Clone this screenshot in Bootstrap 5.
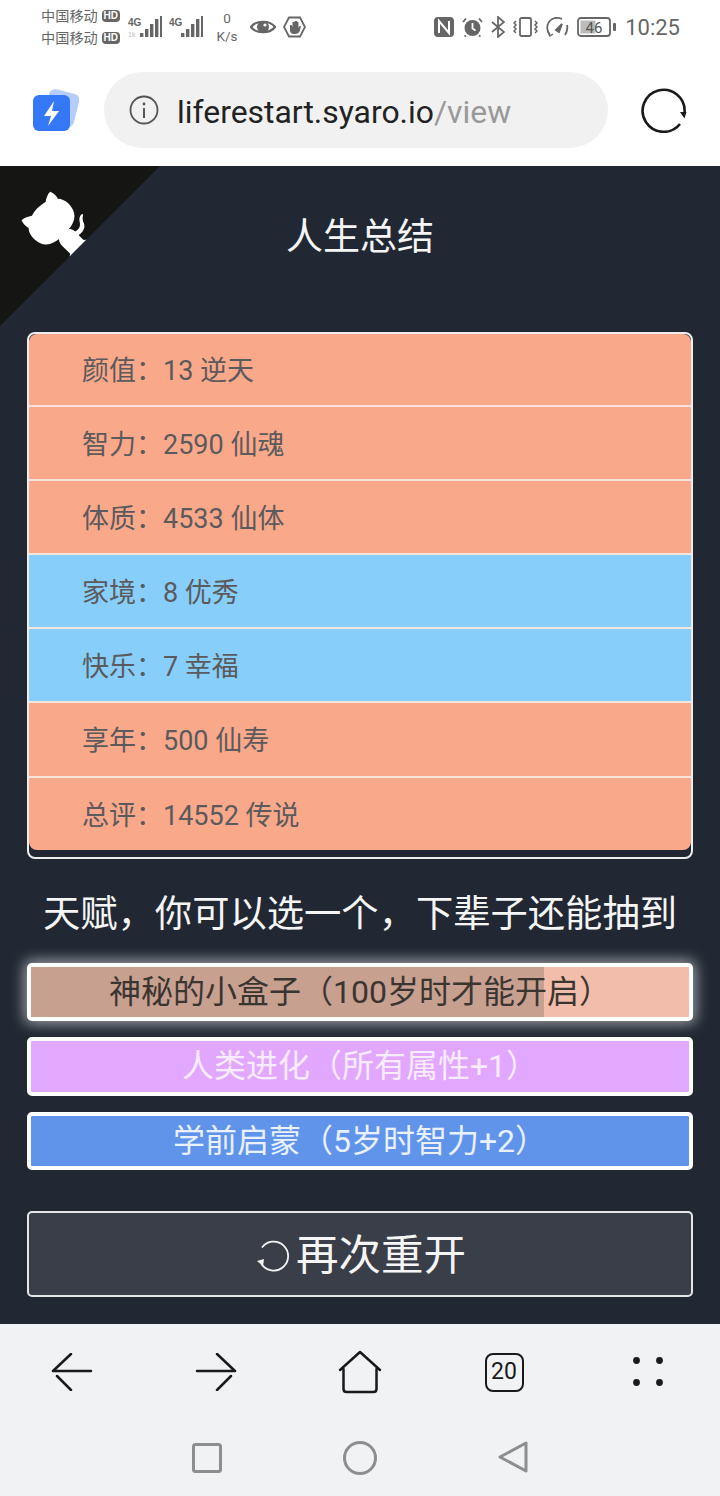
<!DOCTYPE html>
<html lang="zh">
<head>
<meta charset="utf-8">
<title>Life Restart</title>
<link href="https://cdn.jsdelivr.net/npm/bootstrap@5.3.0/dist/css/bootstrap.min.css" rel="stylesheet">
<style>
html,body{height:1496px;width:720px;overflow:hidden;background:#fff;font-family:Roboto,"Noto Sans CJK SC",sans-serif}
svg{display:block;flex:none}
.status-bar{height:60px;padding:0 0 6px 41px;color:#666;background:#fff}
.carrier{font-size:14.2px;line-height:22px;width:80px;white-space:nowrap;color:#666}
.carrier-line{display:flex;align-items:center;gap:4px}
.hd-tag{background:#666;color:#fff;font:700 10px/12px "Liberation Sans",sans-serif;width:18px;height:12px;border-radius:4px;text-align:center;flex:none}
.net-speed{width:24px;text-align:center;font-size:13.5px;line-height:18px;color:#666;margin-left:12px}
.clock{font-size:22px;line-height:26px;color:#666;margin-left:8px;font-weight:400;padding-top:2px}
.sig-first{margin-left:7px}
.sig-next{margin-left:7px}
.eye-icon{margin-left:11px}
.tray{padding-right:40px}
.addr-bar{height:106px;padding:0 33px 6px 33px;background:#fff}
.addr-pill{width:504px;height:76px;border-radius:38px;background:#f1f1f1;margin-left:25px;padding-left:25px}
.addr-text{font-size:31.900px;line-height:40px;color:#222;margin-left:18px;white-space:nowrap;padding-top:3px;height:43px}
.addr-path{color:#999}
.stage{height:1158px;background:#212833;color:#f5f5f5;padding:44px 27px 0;position:relative}
.fork-corner{position:absolute;left:0;top:0}
.page-title{font-size:37px;line-height:52px;font-weight:400;text-align:center;margin:2px 0 68px}
.stats-panel{height:527px;background:#212833;border:2px solid #eee;border-radius:8px;overflow:hidden;--bs-list-group-bg:transparent}
.stat-row{height:74.100px;line-height:76px;font-size:27px;color:#5b5a5c;padding:0 0 0 53px;border:0;border-bottom:2px solid #f4e4dc;white-space:nowrap;border-radius:0}
.stat-row:first-child{height:73.100px;line-height:74px}
.stat-row:last-child{border-bottom:0;height:72px}
.tone-legend{background:#f9a88a}
.tone-rare{background:#87cefa}
.talent-title{font-size:37.300px;line-height:50px;font-weight:400;text-align:center;margin:30px -10px 24px;white-space:nowrap}
.talent-btn{display:block;position:relative;width:100%;height:58px;padding:0;border:4px solid #fff;border-radius:5px;font-size:32px;line-height:50px;color:#fdf3f8;margin-bottom:16px;overflow:hidden;--bs-btn-border-radius:5px}
.talent-btn span{position:relative}
.talent-box{background:#f2bdaa;color:#3b3531;box-shadow:0 0 14px 3px rgba(255,255,255,.55);overflow:visible}
.talent-fill{position:absolute;left:0;top:0;bottom:0;background:#c7a090}
.talent-purple{background:#e2a7ff;color:#f9ecff}
.talent-blue{background:#6094eb;color:#e8f1fd}
.talent-blue,.talent-purple{height:58.500px;line-height:51px}
.again-btn{width:100%;height:86px;margin-top:41px;padding:4px 0 0 2px;background:#3a3e48;border:2px solid #e6e6e6;border-radius:5px;color:#f5f5f5;font-size:42.500px;line-height:50px}
.again-label{margin-left:6px}
.bottom-bar{height:172px;background:#f1f2f4}
.browser-nav{height:92px}
.nav-cell{width:144px;height:92px;padding-top:4px}
.tab-count{width:39px;height:39px;border:2.500px solid #1a1a1a;border-radius:8px;font-size:23px;line-height:34px;text-align:center;color:#1a1a1a}
.system-nav{height:80px}
.sys-cell{width:153px;padding-top:27px}
.sys-lift{margin-top:-2px}
</style>
</head>
<body>

<div class="status-bar d-flex align-items-center">
  <div class="carrier">
    <div class="carrier-line">中国移动<span class="hd-tag">HD</span></div>
    <div class="carrier-line">中国移动<span class="hd-tag">HD</span></div>
  </div>
  <svg class="sig-first" width="34" height="22" viewBox="0 0 34 22" fill="#666"><text x="0" y="10" font-family="Liberation Sans" font-size="10" font-weight="700">4G</text><text x="0" y="21" font-family="Liberation Sans" font-size="7" fill="#bbb">1k</text><rect x="12" y="17" width="3.400" height="4"/><rect x="17" y="13" width="3.400" height="8"/><rect x="22" y="8" width="3.400" height="13"/><rect x="27" y="3" width="3.400" height="18"/><rect x="32" y="0" width="2" height="21"/></svg>
  <svg class="sig-next" width="34" height="22" viewBox="0 0 34 22" fill="#666"><text x="0" y="10" font-family="Liberation Sans" font-size="10" font-weight="700">4G</text><rect x="12" y="17" width="3.400" height="4"/><rect x="17" y="13" width="3.400" height="8"/><rect x="22" y="8" width="3.400" height="13"/><rect x="27" y="3" width="3.400" height="18"/><rect x="32" y="0" width="2" height="21"/></svg>
  <div class="net-speed">0<br>K/s</div>
  <svg class="eye-icon" width="26" height="18" viewBox="0 0 26 18"><path d="M1 9C6 2 20 2 25 9 20 16 6 16 1 9Z" fill="none" stroke="#666" stroke-width="2.200"/><circle cx="13" cy="9" r="6" fill="#666"/><circle cx="15" cy="7" r="1.600" fill="#fff"/></svg>
  <svg class="sig-next" width="23" height="22" viewBox="0 0 23 22"><path d="M6 1.500h11L22 11l-5 9.500H6L1 11Z" fill="none" stroke="#666" stroke-width="1.800"/><path d="M7 9v5c0 3 2 4 4.500 4s5-1 5.500-4l1-4h-1.500l-1 2V6h-1.200v4V5h-1.300v5V5h-1.300v5V6H9.500v5L8.500 9Z" fill="#666"/></svg>
  <div class="ms-auto d-flex align-items-center tray">
    <svg width="20" height="20" viewBox="0 0 20 20"><rect width="20" height="20" rx="4" fill="#666"/><path d="M5 16V4l10 12V4" fill="none" stroke="#fff" stroke-width="2"/></svg>
    <svg class="ms-2" width="21" height="20" viewBox="0 0 21 20"><circle cx="10.500" cy="11" r="8" fill="#666"/><path d="M10.500 6v5.500l3 2" fill="none" stroke="#fff" stroke-width="1.800"/><path d="M1 5l3-3.500M20 5l-3-3.500M4 18.500l-1.500 1M17 18.500l1.500 1" stroke="#666" stroke-width="1.800"/></svg>
    <svg class="ms-2" width="14" height="22" viewBox="0 0 14 22"><path d="M1 6l12 10-6 5V1l6 5L1 16" fill="none" stroke="#666" stroke-width="1.800"/></svg>
    <svg class="ms-2" width="25" height="20" viewBox="0 0 25 20" fill="none" stroke="#666" stroke-width="1.800"><rect x="7" y="1" width="11" height="18" rx="1.500"/><path d="M3 4 1 6l2 2-2 2 2 2-2 2 2 2M22 4l2 2-2 2 2 2-2 2 2 2-2 2" stroke-width="1.500"/></svg>
    <svg class="sig-next" width="24" height="22" viewBox="0 0 24 22" fill="none" stroke="#666" stroke-width="1.800"><path d="M5 19C0 13 2 4 10 2c3-.6 5 0 7 1M22 9c1 4 0 7-2 10"/><path d="M11 14l6-6-3 8Z" fill="#666"/><path d="M3 16l2 4 3-2" stroke-width="1.500"/></svg>
    <svg class="ms-2" width="40" height="20" viewBox="0 0 40 20"><rect x="1" y="1" width="32" height="18" rx="3" fill="none" stroke="#666" stroke-width="1.800"/><rect x="3.500" y="3.500" width="15" height="13" fill="#bbb"/><rect x="36" y="6" width="3" height="8" rx="1" fill="#666"/><text x="17" y="15.500" text-anchor="middle" font-family="Roboto" font-size="15" fill="#555">46</text></svg>
    <div class="clock">10:25</div>
  </div>
</div>

<div class="addr-bar d-flex align-items-center">
  <svg width="46" height="46" viewBox="0 0 46 46"><rect x="13" y="4" width="31" height="34" rx="6" fill="#b5cdfb" transform="rotate(14 28 21)"/><rect x="0" y="8" width="37" height="36" rx="6" fill="#3478f6"/><path d="M21 14l-10 15h7l-3 10 11-15h-7Z" fill="#fff"/></svg>
  <div class="addr-pill d-flex align-items-center">
    <svg width="30" height="30" viewBox="0 0 30 30"><circle cx="15" cy="15" r="13.500" fill="none" stroke="#555" stroke-width="1.800"/><rect x="14" y="13" width="2" height="10" fill="#555"/><circle cx="15" cy="9" r="1.400" fill="#555"/></svg>
    <div class="addr-text">liferestart.syaro.io<span class="addr-path">/view</span></div>
  </div>
  <svg class="ms-auto" width="46" height="46" viewBox="0 0 46 46"><path d="M39 37A21 21 0 1 1 43.600 25" fill="none" stroke="#1a1a1a" stroke-width="2.600"/><path d="M39 25h6.500l-2 6.500Z" fill="#1a1a1a"/></svg>
</div>

<main class="stage">
  <svg class="fork-corner" width="160" height="160" viewBox="0 0 250 250"><g transform="translate(250 0) scale(-1 1)"><path fill="#151513" d="M0,0 L115,115 L130,115 L142,142 L250,250 L250,0 Z"/><path fill="#fff" d="M128.300,109C113.800,99.700 119,89.600 119,89.600C122,82.700 120.500,78.600 120.500,78.600C119.200,72 123.400,76.300 123.400,76.300C127.300,80.900 125.500,87.300 125.500,87.300C122.900,97.600 130.600,101.900 134.400,103.200"/><path fill="#fff" d="M115,115C114.900,115.100 118.700,116.500 119.800,115.400L133.700,101.600C136.900,99.200 139.900,98.400 142.200,98.600C133.800,88 127.500,74.400 143.800,58C148.500,53.400 154,51.200 159.700,51C160.300,49.400 163.200,43.600 171.400,40.100C171.400,40.100 176.100,42.500 178.800,56.200C183.100,58.600 187.200,61.800 190.900,65.400C194.500,69 197.700,73.200 200.100,77.600C213.800,80.200 216.300,84.900 216.300,84.900C212.700,93.100 206.900,96 205.400,96.600C205.100,102.400 203,107.800 198.300,112.500C181.900,128.900 168.300,122.500 157.700,114.100C157.900,116.900 156.700,120.900 152.700,124.900L141,136.500C139.800,137.700 141.600,141.900 141.800,141.800Z"/></g></svg>

  <h1 class="page-title">人生总结</h1>

  <ul class="list-group stats-panel">
    <li class="list-group-item stat-row tone-legend">颜值：13 逆天</li>
    <li class="list-group-item stat-row tone-legend">智力：2590 仙魂</li>
    <li class="list-group-item stat-row tone-legend">体质：4533 仙体</li>
    <li class="list-group-item stat-row tone-rare">家境：8 优秀</li>
    <li class="list-group-item stat-row tone-rare">快乐：7 幸福</li>
    <li class="list-group-item stat-row tone-legend">享年：500 仙寿</li>
    <li class="list-group-item stat-row tone-legend">总评：14552 传说</li>
  </ul>

  <h2 class="talent-title">天赋，你可以选一个，下辈子还能抽到</h2>

  <button type="button" class="btn talent-btn talent-box"><div class="talent-fill" style="width:78%"></div><span>神秘的小盒子（100岁时才能开启）</span></button>
  <button type="button" class="btn talent-btn talent-purple"><span>人类进化（所有属性+1）</span></button>
  <button type="button" class="btn talent-btn talent-blue"><span>学前启蒙（5岁时智力+2）</span></button>

  <button type="button" class="btn again-btn d-flex align-items-center justify-content-center">
    <svg width="34" height="32" viewBox="0 0 34 32"><path d="M6 7.500A14.500 14.500 0 1 1 5.500 24" fill="none" stroke="#f5f5f5" stroke-width="1.800"/><path d="M1 21l7 -2-1 7Z" fill="#f5f5f5"/></svg>
    <span class="again-label">再次重开</span>
  </button>
</main>

<div class="bottom-bar">
  <div class="browser-nav d-flex">
    <div class="nav-cell d-flex align-items-center justify-content-center"><svg width="42" height="38" viewBox="0 0 42 38" fill="none" stroke="#1a1a1a" stroke-width="2.500" stroke-linecap="round"><path d="M2 18h38M20 1 2 18M6 23l14 14"/></svg></div>
    <div class="nav-cell d-flex align-items-center justify-content-center"><svg width="42" height="38" viewBox="0 0 42 38" fill="none" stroke="#1a1a1a" stroke-width="2.500" stroke-linecap="round"><path d="M2 18h38M22 1l18 17M36 23 22 37"/></svg></div>
    <div class="nav-cell d-flex align-items-center justify-content-center"><svg width="44" height="44" viewBox="0 0 44 44" fill="none" stroke="#1a1a1a" stroke-width="2.500" stroke-linecap="round" stroke-linejoin="round"><path d="M2 20 22 2l20 18M5.500 19v20q0 3 3 3h27q3 0 3-3V19"/></svg></div>
    <div class="nav-cell d-flex align-items-center justify-content-center"><div class="tab-count">20</div></div>
    <div class="nav-cell d-flex align-items-center justify-content-center"><svg width="30" height="30" viewBox="0 0 30 30" fill="#1a1a1a"><circle cx="3.500" cy="3.500" r="3.400"/><circle cx="26.500" cy="3.500" r="3.400"/><circle cx="3.500" cy="25.500" r="3.400"/><circle cx="26.500" cy="25.500" r="3.400"/></svg></div>
  </div>
  <div class="system-nav d-flex justify-content-center">
    <div class="sys-cell d-flex justify-content-center"><svg width="30" height="30" viewBox="0 0 30 30"><rect x="1.500" y="1.500" width="27" height="27" rx="2" fill="none" stroke="#8e8e8e" stroke-width="3"/></svg></div>
    <div class="sys-cell d-flex justify-content-center"><svg class="sys-lift" width="34" height="34" viewBox="0 0 34 34"><circle cx="17" cy="17" r="15.500" fill="none" stroke="#8e8e8e" stroke-width="3"/></svg></div>
    <div class="sys-cell d-flex justify-content-center"><svg class="sys-lift" width="30" height="32" viewBox="0 0 30 32"><path d="M2 16 28 2v28Z" fill="none" stroke="#8e8e8e" stroke-width="3" stroke-linejoin="round"/></svg></div>
  </div>
</div>

<script src="https://cdn.jsdelivr.net/npm/bootstrap@5.3.0/dist/js/bootstrap.bundle.min.js"></script>
</body>
</html>
